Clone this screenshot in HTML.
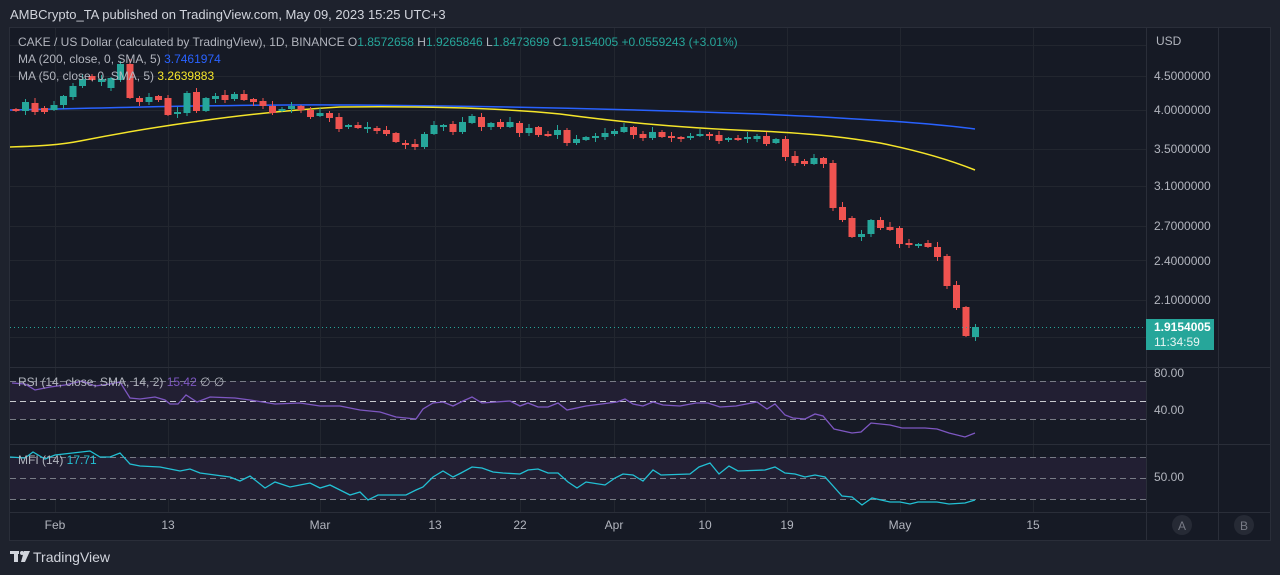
<!DOCTYPE html>
<html><head><meta charset="utf-8"><style>
html,body{margin:0;padding:0;background:#1e222d;width:1280px;height:575px;overflow:hidden;font-family:"Liberation Sans",sans-serif;}
svg text{font-family:"Liberation Sans",sans-serif;}
</style></head><body>
<svg id="s" width="1280" height="575" xmlns="http://www.w3.org/2000/svg">
<rect x="0" y="0" width="1280" height="575" fill="#1e222d"/>
<text x="10" y="19" fill="#d1d4dc" font-size="13">AMBCrypto_TA published on TradingView.com, May 09, 2023 15:25 UTC+3</text>
<rect x="9.5" y="27.5" width="1261" height="513" fill="#161a25" stroke="#2a2e39"/>
<g id="grid" stroke="#22262f" stroke-width="1"></g>
<!-- RSI / MFI bands -->
<rect x="10" y="381" width="1136" height="38" fill="#221f33"/>
<rect x="10" y="457" width="1136" height="42" fill="#221f33"/>
<g stroke-dasharray="6,4" stroke-width="1">
<line x1="10" y1="381.5" x2="1146" y2="381.5" stroke="#787b86"/>
<line x1="10" y1="401.5" x2="1146" y2="401.5" stroke="#c8cad0"/>
<line x1="10" y1="419.5" x2="1146" y2="419.5" stroke="#787b86"/>
<line x1="10" y1="457.5" x2="1146" y2="457.5" stroke="#787b86"/>
<line x1="10" y1="478.5" x2="1146" y2="478.5" stroke="#787b86"/>
<line x1="10" y1="499.5" x2="1146" y2="499.5" stroke="#787b86"/>
</g>
<g stroke="#2a2e39" stroke-width="1">
<line x1="10" y1="367.5" x2="1270" y2="367.5"/>
<line x1="10" y1="444.5" x2="1270" y2="444.5"/>
<line x1="10" y1="512.5" x2="1270" y2="512.5"/>
<line x1="1146.5" y1="28" x2="1146.5" y2="540"/>
<line x1="1218.5" y1="28" x2="1218.5" y2="540"/>
</g>
<!-- MAs -->
<path d="M10,110 C100,108 250,104 350,105 C500,106 650,110 760,114 C850,118 930,123 975,129" stroke="#2962ff" stroke-width="1.5" fill="none"/>
<path d="M10,147 C40,146 60,145 80,141 C150,127 250,112 340,107 C430,106 500,108 560,114 C620,122 680,128 760,131 C820,134 850,138 880,143 C920,151 950,160 975,170" stroke="#f5e52a" stroke-width="1.5" fill="none"/>
<g id="candles"></g>
<line x1="10" y1="327.5" x2="1146" y2="327.5" stroke="#26a69a" stroke-dasharray="1,3"/>
<!-- RSI line -->
<polyline fill="none" stroke="#7e57c2" stroke-width="1.3" points="12,383 25,384 35,390 50,387 65,385 82,381 95,386 110,384 120,382 130,398 140,399 155,397 165,400 170,404 178,404 186,395 197,402 210,397 235,398 250,400 275,404 300,403 320,406 340,406 360,410 380,412 396,417 416,419 423,409 433,403 443,402 453,406 463,401 472,397 482,403 510,401 520,406 528,403 538,407 548,407 558,403 567,410 586,406 617,402 625,399 633,404 643,406 653,402 663,405 680,406 696,403 708,403 720,407 736,406 757,402 767,409 775,404 785,415 793,418 805,419 815,414 823,416 834,429 852,433 861,432 871,423 890,425 902,428 925,428 937,429 949,433 965,437 975,433"/>
<polyline fill="none" stroke="#22c0d4" stroke-width="1.3" points="10,457 25,458 33,452 45,459 55,455 90,451 100,457 110,457 120,453 130,464 140,466 160,467 170,469 180,471 190,469 200,473 230,477 240,481 250,476 265,488 275,482 290,487 300,485 310,483 320,488 330,485 350,495 360,492 368,500 378,495 406,495 416,490 423,487 433,477 443,471 453,477 461,473 472,467 482,468 493,472 503,473 520,474 528,470 538,469 548,473 558,473 568,482 577,488 586,482 605,485 615,478 623,474 633,475 643,481 653,470 661,475 690,474 699,467 710,463 719,474 729,466 738,471 765,470 775,467 785,473 795,474 805,477 815,475 825,477 842,496 852,497 862,505 872,498 890,502 900,502 910,504 918,502 937,502 949,504 965,503 975,500"/>
<!-- legend -->
<g font-size="12" fill="#b2b5be">
<text x="18" y="46">CAKE / US Dollar (calculated by TradingView), 1D, BINANCE  O<tspan fill="#26a69a">1.8572658</tspan>  H<tspan fill="#26a69a">1.9265846</tspan>  L<tspan fill="#26a69a">1.8473699</tspan>  C<tspan fill="#26a69a">1.9154005</tspan>  <tspan fill="#26a69a">+0.0559243 (+3.01%)</tspan></text>
<text x="18" y="63">MA (200, close, 0, SMA, 5)  <tspan fill="#2962ff">3.7461974</tspan></text>
<text x="18" y="80">MA (50, close, 0, SMA, 5)  <tspan fill="#f5e52a">3.2639883</tspan></text>
<text x="18" y="386">RSI (14, close, SMA, 14, 2)  <tspan fill="#7e57c2">15.42</tspan>  ∅  ∅</text>
<text x="18" y="464">MFI (14)  <tspan fill="#22c0d4">17.71</tspan></text>
</g>
<!-- price axis -->
<g font-size="12" fill="#b2b5be">
<text x="1156" y="45">USD</text>
<text x="1154" y="80">4.5000000</text>
<text x="1154" y="114">4.0000000</text>
<text x="1154" y="153">3.5000000</text>
<text x="1154" y="190">3.1000000</text>
<text x="1154" y="230">2.7000000</text>
<text x="1154" y="265">2.4000000</text>
<text x="1154" y="304">2.1000000</text>
<text x="1154" y="377">80.00</text>
<text x="1154" y="414">40.00</text>
<text x="1154" y="481">50.00</text>
</g>
<rect x="1146" y="319" width="68" height="31" fill="#26a69a"/>
<text x="1154" y="331" font-size="12" font-weight="bold" fill="#ffffff">1.9154005</text>
<text x="1154" y="346" font-size="12" fill="#e8f5f3">11:34:59</text>
<!-- time axis -->
<g font-size="12" fill="#b2b5be" text-anchor="middle">
<text x="55" y="529">Feb</text><text x="168" y="529">13</text><text x="320" y="529">Mar</text><text x="435" y="529">13</text><text x="520" y="529">22</text><text x="614" y="529">Apr</text><text x="705" y="529">10</text><text x="787" y="529">19</text><text x="900" y="529">May</text><text x="1033" y="529">15</text>
</g>
<circle cx="1182" cy="525" r="10" fill="#262a35"/><text x="1182" y="530" font-size="12" fill="#787b86" text-anchor="middle">A</text>
<circle cx="1244" cy="525" r="10" fill="#262a35"/><text x="1244" y="530" font-size="12" fill="#787b86" text-anchor="middle">B</text>
<!-- logo -->
<g fill="#d1d4dc">
<rect x="10" y="551" width="9" height="3"/><rect x="14" y="551" width="4" height="11"/>
<circle cx="22" cy="553" r="2"/>
<path d="M24,551 L30,551 L25,562 L21,562 Z"/>
</g>
<text x="33" y="562" font-size="14" fill="#d1d4dc">TradingView</text>
</svg>
<script>
var ns="http://www.w3.org/2000/svg";
var g=document.getElementById('grid');
[45,76,110,149,186,226,260,300,337].forEach(function(y){var l=document.createElementNS(ns,'line');l.setAttribute('x1',10);l.setAttribute('x2',1146);l.setAttribute('y1',y+.5);l.setAttribute('y2',y+.5);g.appendChild(l);});
[55,168,320,435,520,614,705,787,900,1033].forEach(function(x){var l=document.createElementNS(ns,'line');l.setAttribute('x1',x+.5);l.setAttribute('x2',x+.5);l.setAttribute('y1',28);l.setAttribute('y2',512);g.appendChild(l);});
var d=[[109,111],[111,102],[103,112],[108,112],[110,105],[105,96],[97,86],[86,79],[76,80],[82,79],[88,78],[80,64],[64,98],[98,102],[102,97],[96,100],[98,115],[113,112],[113,93],[92,111],[111,98],[99,96],[95,100],[99,94],[94,100],[99,102],[101,106],[106,113],[111,109],[109,106],[106,110],[110,117],[116,113],[113,118],[117,129],[127,125],[125,128],[128,127],[128,131],[130,134],[133,142],[143,144],[144,147],[147,134],[134,125],[126,125],[124,132],[132,122],[123,116],[117,127],[127,123],[122,127],[127,122],[123,133],[133,128],[127,135],[134,135],[135,130],[130,143],[143,139],[140,137],[137,136],[137,133],[134,131],[132,127],[127,135],[134,138],[138,132],[132,137],[136,138],[137,139],[138,136],[136,134],[134,135],[135,141],[139,138],[138,139],[139,137],[139,136],[136,144],[143,139],[139,157],[156,163],[161,164],[164,158],[158,164],[163,208],[207,220],[218,237],[237,234],[234,220],[220,228],[227,230],[228,244],[243,245],[245,244],[243,247],[247,257],[256,286],[285,308],[307,336],[337,327]];
var c=document.getElementById('candles');
d.forEach(function(p,i){var x=16+i*9.5;var o=p[0],cl=p[1];var up=cl<o||(cl==o&&i%2);var col=up?'#26a69a':'#ef5350';
var top=Math.min(o,cl),bot=Math.max(o,cl);if(bot-top<2)bot=top+2;
var hi=top-((i*7)%5)-1,lo=bot+((i*3)%4)+1;
var w=document.createElementNS(ns,'line');w.setAttribute('x1',x);w.setAttribute('x2',x);w.setAttribute('y1',hi);w.setAttribute('y2',lo);w.setAttribute('stroke',col);w.setAttribute('stroke-width',1);c.appendChild(w);
var r=document.createElementNS(ns,'rect');r.setAttribute('x',x-3.5);r.setAttribute('y',top);r.setAttribute('width',7);r.setAttribute('height',bot-top);r.setAttribute('fill',col);c.appendChild(r);});
</script>
</body></html>
